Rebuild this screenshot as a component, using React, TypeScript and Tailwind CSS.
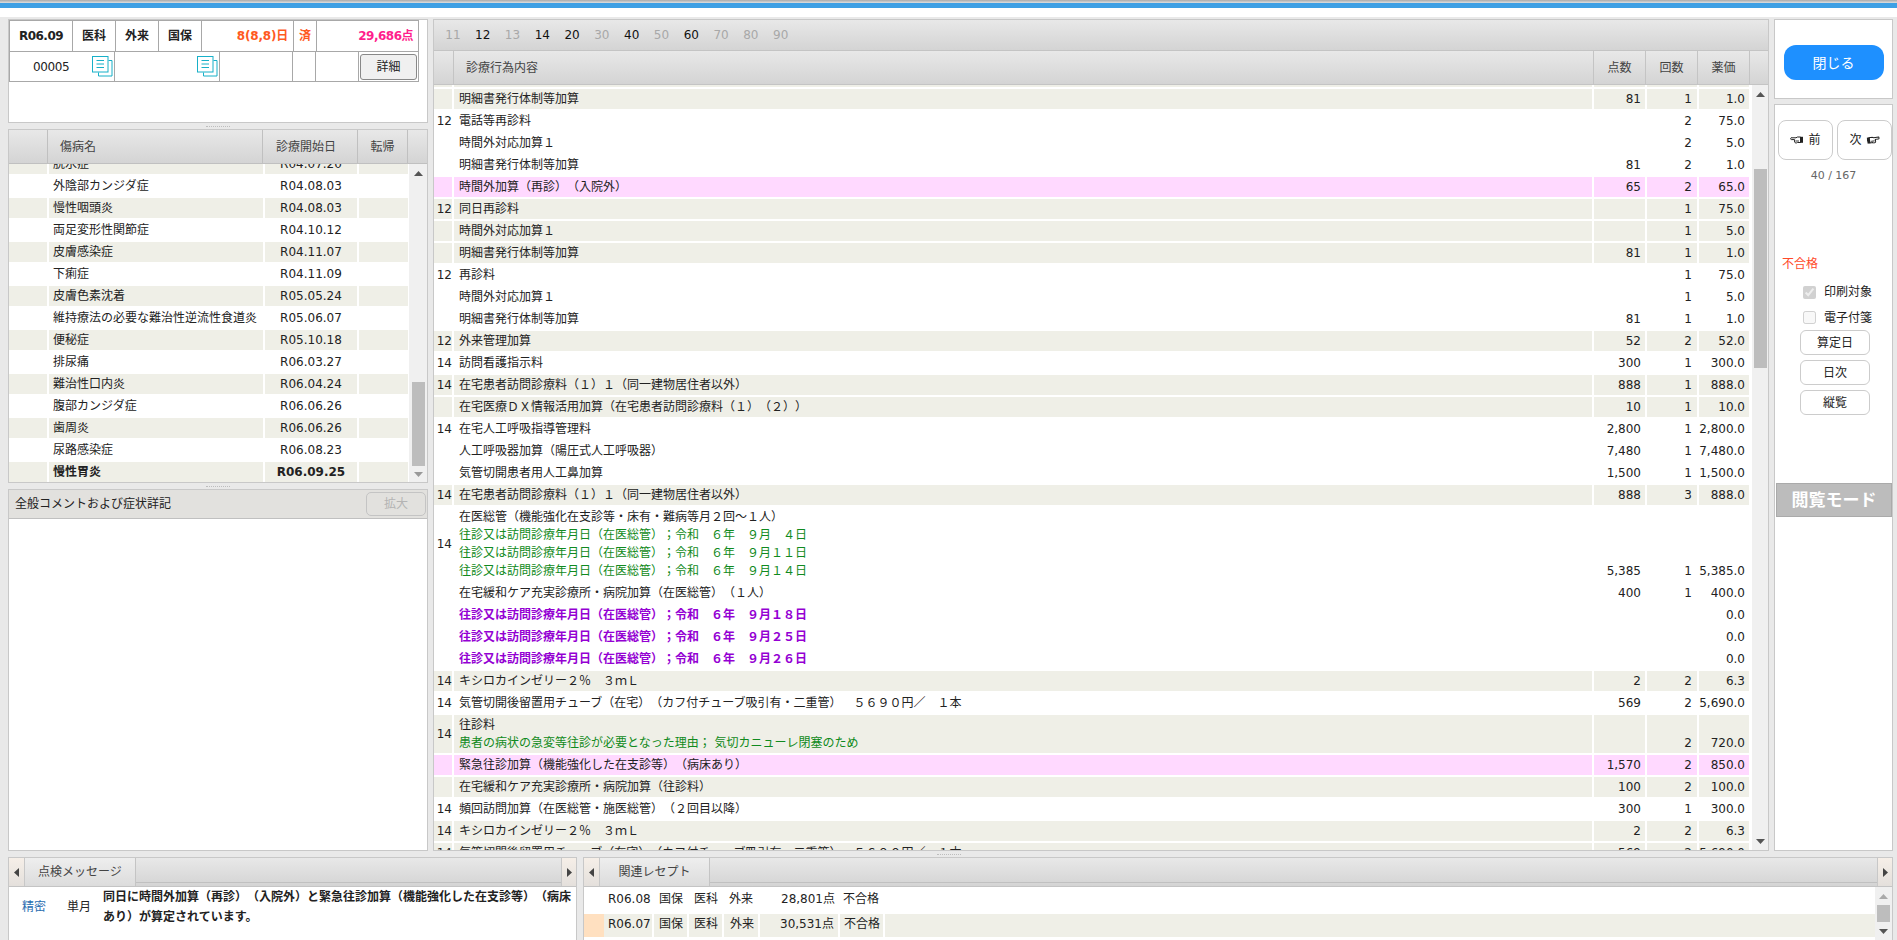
import React from "react";

type Row = {
  c?: string;
  t: React.ReactNode;
  p?: string;
  k?: string;
  v?: string;
  bg: "b" | "w" | "p";
  tall?: boolean;
};

const bgClass = { b: "bg-[#efefe7]", w: "bg-white", p: "bg-[#ffd9ff]" };

const Green = ({ children }: { children: React.ReactNode }) => <div className="text-[#108a20]">{children}</div>;
const Purple = ({ children }: { children: string }) => <span className="font-bold text-[#9400d3]">{children}</span>;

const meisai = "明細書発行体制等加算";
const jikan = "時間外対応加算１";
const zaitaku = "在宅患者訪問診療料（１）１（同一建物居住者以外）";
const xylo = "キシロカインゼリー２％　３ｍＬ";
const kikan = "気管切開後留置用チューブ（在宅）（カフ付チューブ吸引有・二重管）　５６９０円／　１本";
const oshin = "往診又は訪問診療年月日（在医総管）；令和　６年　";

const rows: Row[] = [
  { t: "", bg: "b" },
  { t: meisai, p: "81", k: "1", v: "1.0", bg: "b" },
  { c: "12", t: "電話等再診料", k: "2", v: "75.0", bg: "w" },
  { t: jikan, k: "2", v: "5.0", bg: "w" },
  { t: meisai, p: "81", k: "2", v: "1.0", bg: "w" },
  { t: "時間外加算（再診）（入院外）", p: "65", k: "2", v: "65.0", bg: "p" },
  { c: "12", t: "同日再診料", k: "1", v: "75.0", bg: "b" },
  { t: jikan, k: "1", v: "5.0", bg: "b" },
  { t: meisai, p: "81", k: "1", v: "1.0", bg: "b" },
  { c: "12", t: "再診料", k: "1", v: "75.0", bg: "w" },
  { t: jikan, k: "1", v: "5.0", bg: "w" },
  { t: meisai, p: "81", k: "1", v: "1.0", bg: "w" },
  { c: "12", t: "外来管理加算", p: "52", k: "2", v: "52.0", bg: "b" },
  { c: "14", t: "訪問看護指示料", p: "300", k: "1", v: "300.0", bg: "w" },
  { c: "14", t: zaitaku, p: "888", k: "1", v: "888.0", bg: "b" },
  { t: "在宅医療ＤＸ情報活用加算（在宅患者訪問診療料（１）（２））", p: "10", k: "1", v: "10.0", bg: "b" },
  { c: "14", t: "在宅人工呼吸指導管理料", p: "2,800", k: "1", v: "2,800.0", bg: "w" },
  { t: "人工呼吸器加算（陽圧式人工呼吸器）", p: "7,480", k: "1", v: "7,480.0", bg: "w" },
  { t: "気管切開患者用人工鼻加算", p: "1,500", k: "1", v: "1,500.0", bg: "w" },
  { c: "14", t: zaitaku, p: "888", k: "3", v: "888.0", bg: "b" },
  {
    c: "14",
    t: (
      <>
        <div>在医総管（機能強化在支診等・床有・難病等月２回～１人）</div>
        <Green>{oshin}９月　４日</Green>
        <Green>{oshin}９月１１日</Green>
        <Green>{oshin}９月１４日</Green>
      </>
    ),
    p: "5,385",
    k: "1",
    v: "5,385.0",
    bg: "w",
    tall: true,
  },
  { t: "在宅緩和ケア充実診療所・病院加算（在医総管）（１人）", p: "400", k: "1", v: "400.0", bg: "w" },
  { t: <Purple>{oshin + "９月１８日"}</Purple>, v: "0.0", bg: "w" },
  { t: <Purple>{oshin + "９月２５日"}</Purple>, v: "0.0", bg: "w" },
  { t: <Purple>{oshin + "９月２６日"}</Purple>, v: "0.0", bg: "w" },
  { c: "14", t: xylo, p: "2", k: "2", v: "6.3", bg: "b" },
  { c: "14", t: kikan, p: "569", k: "2", v: "5,690.0", bg: "w" },
  {
    c: "14",
    t: (
      <>
        <div>往診料</div>
        <Green>患者の病状の急変等往診が必要となった理由； 気切カニューレ閉塞のため</Green>
      </>
    ),
    k: "2",
    v: "720.0",
    bg: "b",
    tall: true,
  },
  { t: "緊急往診加算（機能強化した在支診等）（病床あり）", p: "1,570", k: "2", v: "850.0", bg: "p" },
  { t: "在宅緩和ケア充実診療所・病院加算（往診料）", p: "100", k: "2", v: "100.0", bg: "b" },
  { c: "14", t: "頻回訪問加算（在医総管・施医総管）（２回目以降）", p: "300", k: "1", v: "300.0", bg: "w" },
  { c: "14", t: xylo, p: "2", k: "2", v: "6.3", bg: "b" },
  { c: "14", t: kikan, p: "569", k: "2", v: "5,690.0", bg: "b" },
];

const diseases = [
  ["脱水症", "R04.07.20"],
  ["外陰部カンジダ症", "R04.08.03"],
  ["慢性咽頭炎", "R04.08.03"],
  ["両足変形性関節症", "R04.10.12"],
  ["皮膚感染症", "R04.11.07"],
  ["下痢症", "R04.11.09"],
  ["皮膚色素沈着", "R05.05.24"],
  ["維持療法の必要な難治性逆流性食道炎", "R05.06.07"],
  ["便秘症", "R05.10.18"],
  ["排尿痛", "R06.03.27"],
  ["難治性口内炎", "R06.04.24"],
  ["腹部カンジダ症", "R06.06.26"],
  ["歯周炎", "R06.06.26"],
  ["尿路感染症", "R06.08.23"],
  ["慢性胃炎", "R06.09.25"],
];

const tabs: [string, boolean][] = [
  ["11", false], ["12", true], ["13", false], ["14", true], ["20", true], ["30", false],
  ["40", true], ["50", false], ["60", true], ["70", false], ["80", false], ["90", false],
];

const Tri = ({ dir, color = "#555" }: { dir: "up" | "down" | "left" | "right"; color?: string }) => {
  const pts = { up: "0,6 4.5,1 9,6", down: "0,1 9,1 4.5,6", left: "6,0 6,9 1,4.5", right: "1,0 1,9 6,4.5" }[dir];
  const w = dir === "up" || dir === "down" ? 9 : 7;
  const h = dir === "up" || dir === "down" ? 7 : 9;
  return (
    <svg width={w} height={h} viewBox={`0 0 ${w} ${h}`}>
      <polygon points={pts} fill={color} />
    </svg>
  );
};

const DocIcon = () => (
  <svg width="21" height="23" viewBox="0 0 21 23" fill="none" stroke="#17b0c8" strokeWidth="1" className="mb-[3px]">
    <path d="M16.5 6.5H20V22H6.5V18.5" fill="white" />
    <rect x="0.5" y="2.5" width="15.5" height="15.5" fill="white" />
    <path d="M4.5 6.5H12M4.5 10H12M4.5 13.5H12" />
  </svg>
);

const Hand = ({ right }: { right?: boolean }) => (
  <svg width="13" height="8" viewBox="0 0 13 8" className={right ? "-scale-x-100 -rotate-[8deg]" : ""}>
    <path d="M1 1.8H6L7.5 1H10.5V6.5H7.5C6.5 7.2 5 7.2 4.6 6V3.6H1.5C0.4 3.6 0.3 2.2 1 1.8Z" fill="white" stroke="#222222" strokeWidth="1" />
    <path d="M5.5 5H9" stroke="#222222" strokeWidth="0.9" />
    <rect x="10" y="0.8" width="3" height="6" fill="#222222" />
  </svg>
);

const Dashes = () => <div className="w-[24px] border-t border-dotted border-[#bdbdbd]" />;

const gradient = "bg-gradient-to-b from-[#e8e8e8] to-[#d4d4d4]";

const TabBar = ({ label, tabW }: { label: string; tabW: string }) => (
  <div className={`flex h-[29px] shrink-0 border-b border-[#c4c4c4] ${gradient}`}>
    <div className="flex w-[16px] items-center justify-center border-r border-[#c8c8c8] bg-gradient-to-b from-[#f6efe8] to-[#e4e0dc]">
      <Tri dir="left" color="#444" />
    </div>
    <div className={`flex ${tabW} items-center justify-center border-r border-[#c4c4c4] text-[#444] bg-gradient-to-b from-[#eeeeee] to-[#dcdcdc]`}>
      {label}
    </div>
    <div className="flex-1 border-b border-[#c0c0c0] mb-[3px]" />
    <div className="flex w-[15px] items-center justify-center border-l border-[#c8c8c8] bg-gradient-to-b from-[#f6efe8] to-[#e4e0dc]">
      <Tri dir="right" color="#444" />
    </div>
  </div>
);

const SideBtn = ({ children, first }: { children: string; first?: boolean }) => (
  <div className={`${first ? "mt-0" : "mt-[5px]"} ml-[25px] flex h-[25px] w-[70px] items-center justify-center rounded-[6px] border border-[#cccccc] bg-white`}>
    {children}
  </div>
);

export default function App() {
  return (
    <div className="flex h-[940px] w-[1897px] flex-col overflow-hidden bg-[#e9e9e9] [font-family:DejaVu_Sans,Noto_Sans_CJK_JP,sans-serif] [text-spacing-trim:space-all] text-[12px] leading-[20px] text-[#222222]">
      <div className="h-[3px] shrink-0 bg-gradient-to-b from-[#aaaaaa] to-[#e0e0e0]" />
      <div className="h-[5px] shrink-0 bg-[#3fa0e4]" />
      <div className="h-[9px] shrink-0 bg-white" />

      <div className="flex h-[834px] shrink-0 gap-[5px] pt-[2px] pl-[8px]">
        {/* left */}
        <div className="flex w-[420px] flex-col">
          <div className="h-[104px] shrink-0 border border-[#c8c8c8] bg-white">
            <div className="w-[410px] border border-[#a8a8a8]">
              <div className="flex h-[31px] items-center border-b border-[#a8a8a8] text-center font-bold">
                <div className="flex h-full w-[63px] items-center justify-center border-r border-[#a8a8a8] tracking-[-0.5px]">R06.09</div>
                <div className="flex h-full w-[43px] items-center justify-center border-r border-[#a8a8a8]">医科</div>
                <div className="flex h-full w-[43px] items-center justify-center border-r border-[#a8a8a8]">外来</div>
                <div className="flex h-full w-[43px] items-center justify-center border-r border-[#a8a8a8]">国保</div>
                <div className="flex h-full w-[92px] items-center justify-end border-r border-[#a8a8a8] pr-[5px] text-[#ff5a1e] tracking-[-0.2px]">8(8,8)日</div>
                <div className="flex h-full w-[23px] items-center justify-center border-r border-[#a8a8a8] text-[#ff5a1e]">済</div>
                <div className="flex h-full flex-1 items-center justify-end pr-[5px] text-[#ff1e8c] tracking-[-0.5px]">29,686点</div>
              </div>
              <div className="flex h-[29px] items-center">
                <div className="flex h-full w-[105px] items-center justify-between border-r border-[#a8a8a8] pr-[1px] pl-[23px]">
                  <span className="tracking-[-0.4px]">00005</span>
                  <DocIcon />
                </div>
                <div className="flex h-full w-[105px] items-center justify-end border-r border-[#a8a8a8] pr-[1px]">
                  <DocIcon />
                </div>
                <div className="h-full w-[73px] border-r border-[#a8a8a8]" />
                <div className="h-full w-[23px] border-r border-[#a8a8a8]" />
                <div className="h-full w-[43px] border-r border-[#a8a8a8]" />
                <div className="flex h-full flex-1 items-center justify-center">
                  <div className="flex h-[26px] w-[57px] items-center justify-center rounded-[3px] border border-[#888888] bg-[#f0f0f0]">詳細</div>
                </div>
              </div>
            </div>
          </div>

          <div className="flex h-[6px] shrink-0 items-center justify-center"><Dashes /></div>

          <div className="flex h-[354px] shrink-0 flex-col border border-[#c8c8c8] bg-white">
            <div className={`flex h-[34px] shrink-0 border-b border-[#c0c0c0] text-[#444444] ${gradient}`}>
              <div className="w-[39px] border-r border-[#c0c0c0]" />
              <div className="flex w-[215px] items-center border-r border-[#c0c0c0] pl-[12px]">傷病名</div>
              <div className="flex w-[95px] items-center justify-center border-r border-[#c0c0c0] pr-[8px]">診療開始日</div>
              <div className="flex w-[50px] items-center justify-center border-r border-[#c0c0c0]">転帰</div>
            </div>
            <div className="flex min-h-0 flex-1">
              <div className="min-h-0 w-[400px] overflow-hidden">
                <div className="-mt-[10px]">
                  {diseases.map(([n, d], i) => (
                    <div key={i} className={`mb-[2px] grid grid-cols-[38px_214px_92px_49px] gap-x-[2px] ${i === diseases.length - 1 ? "font-bold" : ""}`}>
                      {[0, 1, 2, 3].map((c) => (
                        <div key={c} className={`h-[20px] whitespace-nowrap ${i % 2 === 0 ? "bg-[#efefe7]" : "bg-white"} ${c === 1 ? "pl-[4px]" : ""} ${c === 2 ? "text-center" : ""}`}>
                          {c === 1 ? n : c === 2 ? d : ""}
                        </div>
                      ))}
                    </div>
                  ))}
                </div>
              </div>
              <div className="flex w-[18px] flex-col items-center bg-[#f0f0f0]">
                <div className="flex h-[18px] shrink-0 items-center justify-center"><Tri dir="up" /></div>
                <div className="h-[200px] shrink-0" />
                <div className="h-[84px] w-[13px] shrink-0 bg-[#bdbdbd]" />
                <div className="flex-1" />
                <div className="flex h-[16px] shrink-0 items-center justify-center"><Tri dir="down" color="#999999" /></div>
              </div>
            </div>
          </div>

          <div className="flex h-[6px] shrink-0 items-center justify-center"><Dashes /></div>

          <div className="flex min-h-0 flex-1 flex-col border border-[#c8c8c8] bg-white">
            <div className="flex h-[29px] shrink-0 items-center justify-between border-b border-[#c0c0c0] bg-[#e2e1de] pr-[1px] pl-[6px]">
              <span>全般コメントおよび症状詳記</span>
              <div className="flex h-[24px] w-[60px] items-center justify-center rounded-[5px] border border-[#c4c4c4] text-[#b4b4b4]">拡大</div>
            </div>
          </div>
        </div>

        {/* middle */}
        <div className="flex w-[1336px] flex-col border border-[#c8c8c8] bg-[#f0f0f0]">
          <div className={`flex h-[31px] shrink-0 items-center border-b border-[#c4c4c4] pl-[4px] ${gradient}`}>
            {tabs.map(([l, on]) => (
              <div key={l} className={`w-[29.8px] text-center ${on ? "text-[#111111]" : "text-[#a8a8a8]"}`}>{l}</div>
            ))}
          </div>
          <div className={`flex h-[34px] shrink-0 border-b border-[#c4c4c4] text-[#444444] ${gradient}`}>
            <div className="w-[20px] border-r border-[#c4c4c4]" />
            <div className="flex w-[1140px] items-center border-r border-[#c4c4c4] pl-[12px]">診療行為内容</div>
            <div className="flex w-[52px] items-center justify-center border-r border-[#c4c4c4]">点数</div>
            <div className="flex w-[52px] items-center justify-center border-r border-[#c4c4c4]">回数</div>
            <div className="flex w-[52px] items-center justify-center border-r border-[#c4c4c4]">薬価</div>
          </div>
          <div className="flex min-h-0 flex-1">
            <div className="min-h-0 w-[1318px] overflow-hidden bg-white">
              <div className="-mt-[18px]">
                {rows.map((r, i) => {
                  const bg = bgClass[r.bg];
                  const lh = r.tall ? "py-[1px] leading-[18px]" : "h-[20px]";
                  return (
                    <div key={i} className="mb-[2px] grid grid-cols-[18px_1138px_51px_50px_50px] gap-x-[2px]">
                      <div className={`${bg} flex items-center justify-end`}>{r.c}</div>
                      <div className={`${bg} ${lh} whitespace-nowrap pl-[5px]`}>{r.t}</div>
                      <div className={`${bg} ${lh} flex items-end justify-end pr-[4px]`}>{r.p}</div>
                      <div className={`${bg} ${lh} flex items-end justify-end pr-[5px]`}>{r.k}</div>
                      <div className={`${bg} ${lh} flex items-end justify-end pr-[4px]`}>{r.v}</div>
                    </div>
                  );
                })}
              </div>
            </div>
            <div className="flex w-[16px] flex-col items-center">
              <div className="flex h-[18px] shrink-0 items-center justify-center"><Tri dir="up" /></div>
              <div className="h-[66px] shrink-0" />
              <div className="h-[199px] w-[13px] shrink-0 bg-[#bdbdbd]" />
              <div className="flex-1" />
              <div className="flex h-[18px] shrink-0 items-center justify-center"><Tri dir="down" /></div>
            </div>
          </div>
        </div>

        {/* right */}
        <div className="flex w-[119px] flex-col gap-[5px]">
          <div className="flex h-[80px] shrink-0 justify-center border border-[#c8c8c8] bg-white pt-[25px]">
            <div className="flex h-[35px] w-[100px] items-center justify-center rounded-[12px] bg-[#1e90ff] text-[14px] text-white">閉じる</div>
          </div>
          <div className="min-h-0 flex-1 border border-[#c8c8c8] bg-white pt-[15px]">
            <div className="flex gap-[4px] pl-[3px]">
              <div className="flex h-[40px] w-[55px] items-center justify-center gap-[5px] rounded-[8px] border border-[#cccccc]">
                <Hand /><span>前</span>
              </div>
              <div className="flex h-[40px] w-[55px] items-center justify-center gap-[5px] rounded-[8px] border border-[#cccccc]">
                <span>次</span><Hand right />
              </div>
            </div>
            <div className="mt-[6px] h-[20px] text-center text-[11px] text-[#666666]">40 / 167</div>
            <div className="mt-[68px] pl-[7px] text-[#ff4a2a]">不合格</div>
            <div className="mt-[5px] flex h-[26px] items-center gap-[8px] pl-[28px]">
              <input type="checkbox" checked disabled readOnly className="m-0" />
              <span>印刷対象</span>
            </div>
            <div className="flex h-[25px] items-center gap-[8px] pl-[28px]">
              <input type="checkbox" disabled className="m-0" />
              <span>電子付箋</span>
            </div>
            <SideBtn first>算定日</SideBtn>
            <SideBtn>日次</SideBtn>
            <SideBtn>縦覧</SideBtn>
            <div className="mt-[68px] ml-[1px] flex h-[34px] items-center justify-center border border-[#aaaaaa] bg-[#bcbcbc] text-[17px] font-bold text-white">閲覧モード</div>
          </div>
        </div>
      </div>

      <div className="flex h-[6px] shrink-0 items-center justify-center"><Dashes /></div>

      {/* bottom */}
      <div className="flex min-h-0 flex-1 gap-[6px] pl-[8px]">
        <div className="flex w-[569px] flex-col border border-[#c8c8c8] border-b-0 bg-white">
          <TabBar label="点検メッセージ" tabW="w-[111px]" />
          <div className="flex items-center">
            <div className="w-[58px] pl-[13px] text-[#2a6db0]">精密</div>
            <div className="w-[36px]">単月</div>
            <div className="w-[469px] font-bold">同日に時間外加算（再診）（入院外）と緊急往診加算（機能強化した在支診等）（病床あり）が算定されています。</div>
          </div>
        </div>
        <div className="flex w-[1310px] flex-col border border-[#c8c8c8] border-b-0 bg-white">
          <TabBar label="関連レセプト" tabW="w-[110px]" />
          <div className="flex min-h-0 flex-1">
            <div className="min-w-0 flex-1">
              <div className="flex h-[27px] items-center pb-[4px]">
                <div className="w-[24px]" />
                <div className="w-[51px]">R06.08</div>
                <div className="w-[35px]">国保</div>
                <div className="w-[35px]">医科</div>
                <div className="w-[52px]">外来</div>
                <div className="w-[62px]">28,801点</div>
                <div>不合格</div>
              </div>
              <div className="flex h-[23px] items-stretch bg-[#efefe7] leading-[21px]">
                <div className="w-[20px] bg-[#ffe0c0]" />
                <div className="w-[50px] border-r-[2px] border-white pl-[4px]">R06.07</div>
                <div className="w-[35px] border-r-[2px] border-white pl-[5px]">国保</div>
                <div className="w-[35px] border-r-[2px] border-white pl-[5px]">医科</div>
                <div className="w-[36px] border-r-[2px] border-white pl-[6px]">外来</div>
                <div className="w-[80px] border-r-[2px] border-white pr-[4px] text-right">30,531点</div>
                <div className="w-[45px] border-r-[2px] border-white pl-[4px]">不合格</div>
              </div>
            </div>
            <div className="flex w-[17px] flex-col items-center bg-[#f0f0f0]">
              <div className="flex h-[18px] shrink-0 items-center justify-center"><Tri dir="up" color="#aaaaaa" /></div>
              <div className="h-[17px] w-[13px] shrink-0 bg-[#bdbdbd]" />
              <div className="flex h-[18px] shrink-0 items-center justify-center"><Tri dir="down" /></div>
            </div>
          </div>
        </div>
      </div>
    </div>
  );
}
